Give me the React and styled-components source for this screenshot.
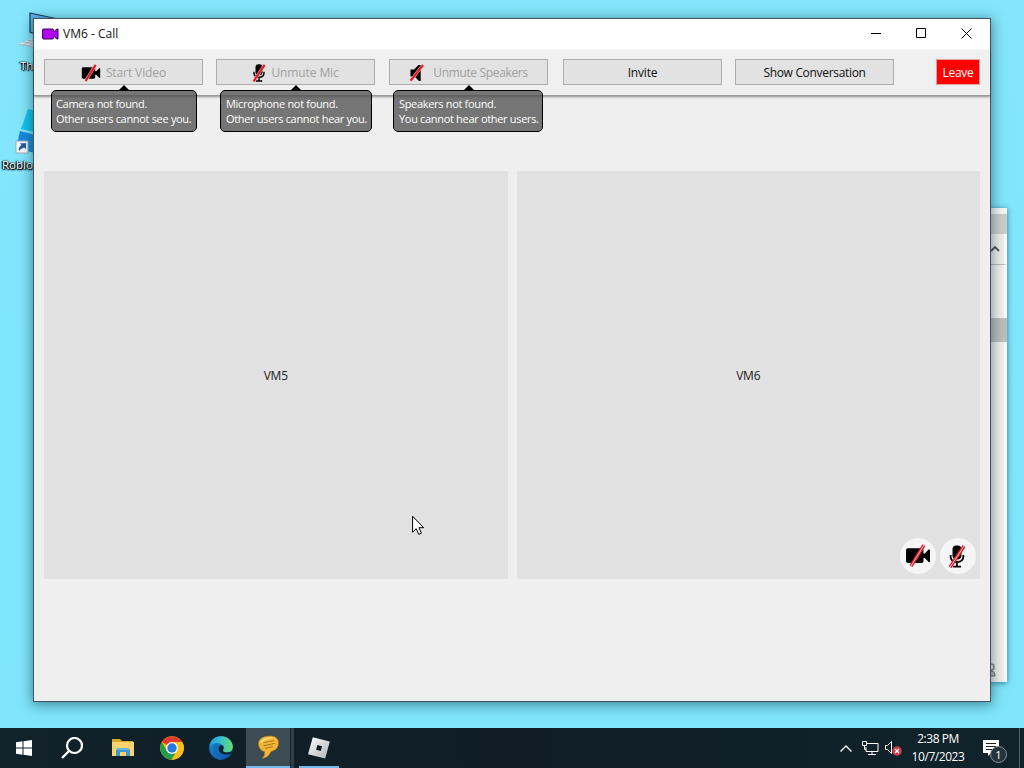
import React from 'react'
import styled, { createGlobalStyle } from 'styled-components'

const GlobalStyle = createGlobalStyle`
* {
  box-sizing: border-box;
}

body {
  margin: 0;
  overflow: hidden;
  font-family: "Open Sans", "Noto Sans", sans-serif;
  font-size: 12px;
}

svg {
  display: block;
  flex-shrink: 0;
}
`

const Desktop = styled.div`
width: 1024px;
height: 768px;
display: flex;
flex-direction: column;
justify-content: space-between;
position: relative;
overflow: hidden;
background: linear-gradient(180deg, #84e6fb 0%, #7fe5fd 50%, #80e5fb 100%);
`

const Shortcuts = styled.div`
width: 60px;
display: flex;
flex-direction: column;
padding-top: 12px;
`

const Shortcut = styled.div`
height: 97px;
padding-left: ${({ $indent }) => $indent}px;

span {
  display: block;
  margin-top: ${({ $gap }) => $gap}px;
  color: white;
  font-size: 11.5px;
  line-height: 14px;
  text-shadow: 0 0 2px #000, 1px 1px 1px #000, -1px 0 1px #000, 0 1px 2px #000;
}

svg {
  margin-left: ${({ $icon }) => $icon}px;
}
`

const BackWindow = styled.div`
position: absolute;
left: 700px;
top: 208px;
width: 307px;
height: 474px;
display: flex;
flex-direction: column;
background: #f0efec;
box-shadow: 0 1px 6px rgba(0, 60, 80, 0.6);
`

const Band = styled.div`
width: 100%;
height: ${({ $height }) => $height}px;
flex-shrink: 0;
display: flex;
align-items: center;
justify-content: flex-end;
padding-right: ${({ $pad }) => $pad || 0}px;
background: ${({ $color }) => $color};
border-right: ${({ $edge }) => ($edge ? '3px solid #fafafa' : 'none')};
border-bottom: ${({ $line }) => ($line ? '1px solid #b9b9b9' : 'none')};
`

const Window = styled.div`
position: absolute;
left: 33px;
top: 18px;
width: 958px;
height: 684px;
display: flex;
flex-direction: column;
background: #efefef;
border: 1px solid #3f555e;
box-shadow: 0 2px 12px 1px rgba(0, 45, 60, 0.5);
`

const TitleBar = styled.div`
height: 31px;
flex-shrink: 0;
display: flex;
align-items: center;
justify-content: space-between;
background: white;
padding-left: 8px;
`

const Title = styled.div`
display: flex;
align-items: center;
gap: 4px;
height: 29px;
color: #111;
margin-bottom: 2px;
`

const Controls = styled.div`
display: flex;
align-items: center;
gap: 34px;
padding-right: 18px;
margin-bottom: 2px;
`

const Toolbar = styled.div`
height: 46px;
flex-shrink: 0;
display: flex;
padding: 9px 10px 0;
background: #f0f0f0;
border-bottom: 1px solid #999;
box-shadow: 0 1px 2px rgba(0, 0, 0, 0.4);
`

const Slot = styled.div`
position: relative;
margin-left: ${({ $before }) => $before || 0}px;
`

const Button = styled.button`
width: 159px;
height: 26px;
display: flex;
align-items: center;
justify-content: center;
gap: ${({ $gap }) => $gap || 5}px;
padding: 1px 0 0;
border: 1px solid #adadad;
background: #e2e2e2;
color: ${({ disabled }) => (disabled ? '#a0a0a0' : '#111')};
font: inherit;
letter-spacing: ${({ $spacing }) => $spacing || -0.1}px;
white-space: nowrap;
`

const LeaveButton = styled(Button)`
width: 44px;
border-color: #e9a0a0;
background: #fe0000;
color: white;
letter-spacing: -0.3px;
`

const Tooltip = styled.div`
position: absolute;
z-index: 2;
top: 31px;
left: ${({ $left }) => $left}px;
width: ${({ $width }) => $width}px;
height: 42px;
padding: 5px 0 0 ${({ $pad }) => $pad || 5}px;
border: 1px solid #000;
border-radius: 5px;
background: rgba(80, 80, 80, 0.77);
color: white;
font-size: 11px;
line-height: 15px;
letter-spacing: -0.32px;
white-space: pre;

&::before {
  content: "";
  position: absolute;
  top: -6px;
  left: ${({ $left }) => 72.5 - $left}px;
  border: 6px solid transparent;
  border-top: 0;
  border-bottom-color: #000;
}
`

const Stage = styled.div`
display: flex;
gap: 9px;
padding: 75px 10px 0;
`

const Tile = styled.div`
position: relative;
flex: 1;
height: 408px;
display: flex;
align-items: center;
justify-content: center;
border-radius: 2px;
background: #e1e1e1;
color: #222;
letter-spacing: -0.2px;
`

const Badges = styled.div`
position: absolute;
right: 4px;
bottom: 5px;
display: flex;
gap: 4px;
`

const Badge = styled.div`
width: 36px;
height: 36px;
display: flex;
align-items: center;
justify-content: center;
padding-right: ${({ $nudge }) => $nudge || 0}px;
border-radius: 50%;
background: #f5f5f5;
`

const Cursor = styled.svg`
position: absolute;
left: 412px;
top: 515px;
`

const Taskbar = styled.div`
height: 40px;
display: flex;
justify-content: space-between;
background: linear-gradient(90deg, #11222a, #101d25 50%, #10232b);
`

const Apps = styled.div`
display: flex;
`

const AppButton = styled.div`
width: ${({ $width }) => $width}px;
height: 40px;
margin-left: ${({ $before }) => $before || 0}px;
display: flex;
align-items: center;
justify-content: center;
background: ${({ $active }) => ($active ? '#3d4b52' : 'transparent')};
border-bottom: ${({ $running }) => ($running ? '2px solid #76b9ed' : 'none')};
box-shadow: ${({ $active }) => ($active ? '1px 0 #17242b, 4px 0 #304048' : 'none')};
`

const Tray = styled.div`
display: flex;
align-items: center;
color: white;
`

const TrayIcon = styled.svg`
margin-left: ${({ $before }) => $before}px;
`

const Clock = styled.div`
width: 66px;
margin-left: 3px;
font-size: 12px;
line-height: 18px;
letter-spacing: -0.45px;
text-align: center;
white-space: nowrap;
`

const Notifications = styled.div`
position: relative;
margin-left: 9px;
width: 40px;
height: 40px;
border-right: 1px solid #526068;
margin-right: 4px;
padding-top: 12px;
padding-left: 3px;
`

const Count = styled.span`
position: absolute;
left: 10px;
top: 18px;
width: 17px;
height: 17px;
border: 1px solid #879197;
border-radius: 50%;
background: #26353c;
font-size: 11px;
line-height: 15px;
text-align: center;
`

const Slash = ({ d }) => (
  <>
    <path d={d} stroke="#f3c9c9" strokeWidth="3" />
    <path d={d} stroke="#e01b24" strokeWidth="2.2" />
  </>
)

// bigger icons show the slash as two red lines with a light core
const WideSlash = ({ d }) => (
  <>
    <path d={d} stroke="#dc2030" strokeWidth="2.7" />
    <path d={d} stroke="#f7c6c6" strokeWidth=".7" />
  </>
)

const CameraOff = ({ size = 20, wide }) => {
  const Line = wide ? WideSlash : Slash
  return (
    <svg width={size} height={size * 0.9} viewBox="0 0 20 18" fill="none">
      <path d="M2.200 3.300H12.800q1.400 0 1.400 1.400v2.600h1L18.200 4.200h1v9.600h-1l-3-3.100h-1v2.600q0 1.400-1.400 1.400H2.200Q.8 14.700.8 13.300V4.700Q.8 3.300 2.200 3.300z" fill="#000" />
      <Line d="M4.600 17L14.600.9" />
    </svg>
  )
}

const MicOff = ({ size = 18, wide }) => {
  const Line = wide ? WideSlash : Slash
  return (
    <svg width={size * 0.78} height={size} viewBox="0 0 14 18" fill="none">
      <rect x="3.500" y=".3" width="7" height="11" rx="3" fill="#000" />
      <path d="M2 7.800v1q0 4.500 5 4.500t5-4.500v-1M7 13v4M3.800 17h6.400" stroke="#000" strokeWidth="1.400" />
      <Line d="M1.600 17.300L12.600.8" />
    </svg>
  )
}

const SpeakerOff = () => (
  <svg width="15" height="18" viewBox="0 0 15 18" fill="none">
    <path d="M1.500 5.500h3.500L9.500 1h2.200v16H10l-4.500-4.500h-4z" fill="#000" />
    <Slash d="M1.600 16.600L14 1" />
  </svg>
)

const FolderIcon = () => (
  <svg width="22" height="20" viewBox="0 0 22 20">
    <path d="M0 1h8l2 2h11v4H0z" fill="#dca427" />
    <path d="M0 4h22v14H0z" fill="#fad36d" />
    <path d="M4 18v-6l2-2h10l2 2v6h-4v-4H8v4z" fill="#3c98d5" />
    <path d="M5 10h12v2H5z" fill="#68b8e8" />
  </svg>
)

const ChromeIcon = () => (
  <svg width="24" height="24" viewBox="0 0 24 24">
    <circle cx="12" cy="12" r="11.800" fill="#fbc016" />
    <path d="M12 12L1.800 6A11.800 11.800 0 0 1 22.200 6z" fill="#e33b2e" />
    <path d="M1.800 6A11.800 11.800 0 0 0 11.500 23.800L17 14.900 12 12 7 14.900z" fill="#249c50" />
    <path d="M12 6h10.200a11.800 11.800 0 0 1-10.700 17.800L17.200 15z" fill="#fbc016" />
    <circle cx="12" cy="12" r="6" fill="#fff" />
    <circle cx="12" cy="12" r="4.700" fill="#2878df" />
  </svg>
)

const EdgeIcon = () => (
  <svg width="24" height="24" viewBox="0 0 24 24">
    <defs>
      <linearGradient id="edgeTop" x1="0" x2="1" y1="0.300" y2="0.300">
        <stop stopColor="#239ddb" />
        <stop offset="0.500" stopColor="#36c3cb" />
        <stop offset="1" stopColor="#69dc64" />
      </linearGradient>
      <linearGradient id="edgeBottom" x1="0" x2="0.700" y1="0" y2="1">
        <stop stopColor="#1592df" />
        <stop offset="1" stopColor="#1259a8" />
      </linearGradient>
    </defs>
    <circle cx="12" cy="12" r="11.800" fill="url(#edgeBottom)" />
    <path d="M.4 10C2 3 7 .2 12 .2c7 0 11.800 5 11.800 10.300 0 4-3 6-6.500 6-3 0-4.300-1.300-3.300-2.700C16 10 12.500 7 8.500 7 4.500 7 1.500 9 .4 10z" fill="url(#edgeTop)" />
    <path d="M9.500 12.500c0-2 1.500-3.200 3-3.200 2 0 2.800 1.800 1.800 4.300-1 2 1 3 3.600 3 2.500 0 5-.8 6-2-.5 2-2 4-5.600 4-4.800 0-8.800-2.200-8.800-6.100z" fill="#10232b" />
    <path d="M8 9c-3 4-1.500 10.500 4 14.300" stroke="#1467ba" strokeWidth="3" fill="none" />
  </svg>
)

const ChatIcon = () => (
  <svg width="24" height="24" viewBox="0 0 24 24">
    <path d="M2.500 8.500C2.500 4 7 1 13.500 1c6 0 9 2.500 9 7 0 4-2.500 7.500-7.500 8.500C13.500 20 11 23 6 23.300 8.500 21.500 9 19 8.500 16.600 4.700 15.800 2.500 12.500 2.500 8.500z" fill="#f5b536" stroke="#a87220" strokeWidth=".6" />
    <path d="M4.500 6.500q5-5.500 16-3.500-11 0-15 5z" fill="#ffe39a" />
    <path d="M7.500 7.800L18 5.500M7.500 10.800L19 8.300M9 13.500l8-1.900" stroke="#a8741f" strokeWidth="1" />
  </svg>
)

const RobloxIcon = () => (
  <svg width="24" height="24" viewBox="0 0 24 24">
    <defs>
      <linearGradient id="robloxFill" x1="0" x2="1" y1="0" y2="1">
        <stop stopColor="#fff" />
        <stop offset="1" stopColor="#aeb3b8" />
      </linearGradient>
    </defs>
    <path d="M5.800 2.200l17 4.400-4.600 17L1 19.200z" fill="url(#robloxFill)" />
    <path d="M10.400 10l4.700 1.200-1.300 4.700-4.700-1.200z" fill="#121e25" />
  </svg>
)

export default function App() {
  return (
    <>
      <GlobalStyle />
      <Desktop>
        <Shortcuts>
          <Shortcut $indent={20} $icon={-2} $gap={9}>
            <svg width="40" height="38" viewBox="0 0 40 38">
              <path d="M12 1l28 6v24L12 20z" fill="#5fb5ee" stroke="#17364b" strokeWidth="1.200" />
              <path d="M0 32l13-5 27 5v6z" fill="#dce7ea" />
              <path d="M1 32l25 5M5 30l25 5M9 28l25 5M4 34l11-6M10 35l8-6" stroke="#a9bcc3" />
            </svg>
            <span>Thi</span>
          </Shortcut>
          <Shortcut $indent={2} $icon={13} $gap={2}>
            <svg width="36" height="47" viewBox="0 0 36 47">
              <path d="M13 0l23 5v22L6 20z" fill="#13c4ec" />
              <path d="M5 22l31 8v17L1 40z" fill="#168be0" />
              <path d="M1 32h12v12H1z" fill="#f7f9fb" stroke="#9daab4" />
              <path d="M4 42q-1-4 2.500-6L5 34.300h6v6L9.300 38.500Q6 39 4 42z" fill="#2359a5" />
            </svg>
            <span>Roblo</span>
          </Shortcut>
        </Shortcuts>

        <BackWindow>
          <Band $height={6} $color="#f5f5f4" />
          <Band $height={20} $color="#cdcdcb" />
          <Band $height={31} $color="#efeeeb" $pad={4} $edge $line>
            <svg width="10" height="6" viewBox="0 0 10 6" fill="none">
              <path d="M1 5l4-4 4 4" stroke="#555" strokeWidth="1.800" />
            </svg>
          </Band>
          <Band $height={53} $color="#f1f0ed" $edge />
          <Band $height={24} $color="#bdbdbc" />
          <Band $height={320} $color="#f0efec" $edge />
          <Band $height={16} $color="#f0efec" $pad={8} $edge>
            <svg width="10" height="14" viewBox="0 0 10 14" fill="none">
              <circle cx="5" cy="4" r="3" stroke="#888" strokeWidth="1.500" />
              <path d="M1 13q0-5 4-5t4 5z" fill="#bbb" stroke="#666" />
            </svg>
          </Band>
          <Band $height={4} $color="#f0efec" $edge />
        </BackWindow>

        <Window>
          <TitleBar>
            <Title>
              <svg width="17" height="12" viewBox="0 0 17 12">
                <path d="M1.500 1h9q1 0 1 1v2l3.500-3h1v10h-1l-3.500-3v2q0 1-1 1h-9q-1 0-1-1V2q0-1 1-1z" fill="#b300f2" stroke="#370553" />
              </svg>
              VM6 - Call
            </Title>
            <Controls>
              <svg width="11" height="11" viewBox="0 0 11 11"><path d="M0 5.500h10" stroke="#000" /></svg>
              <svg width="11" height="11" viewBox="0 0 11 11"><path d="M.5.500h9v9H.5z" stroke="#000" fill="none" /></svg>
              <svg width="11" height="11" viewBox="0 0 11 11"><path d="M.5.500l10 10M10.500.500l-10 10" stroke="#000" /></svg>
            </Controls>
          </TitleBar>

          <Toolbar>
            <Slot>
              <Button disabled><CameraOff />Start Video</Button>
              <Tooltip $left={7} $width={146} $pad={4}>{'Camera not found.\nOther users cannot see you.'}</Tooltip>
            </Slot>
            <Slot $before={13}>
              <Button disabled><MicOff />Unmute Mic</Button>
              <Tooltip $left={4} $width={152}>{'Microphone not found.\nOther users cannot hear you.'}</Tooltip>
            </Slot>
            <Slot $before={14}>
              <Button disabled $gap={9} $spacing={-0.35}><SpeakerOff />Unmute Speakers</Button>
              <Tooltip $left={4} $width={150}>{'Speakers not found.\nYou cannot hear other users.'}</Tooltip>
            </Slot>
            <Slot $before={15}>
              <Button $spacing={-0.2}>Invite</Button>
            </Slot>
            <Slot $before={13}>
              <Button $spacing={-0.32}>Show Conversation</Button>
            </Slot>
            <Slot $before={42}>
              <LeaveButton>Leave</LeaveButton>
            </Slot>
          </Toolbar>

          <Stage>
            <Tile>VM5</Tile>
            <Tile>
              VM6
              <Badges>
                <Badge><CameraOff size={26} wide /></Badge>
                <Badge $nudge={2}><MicOff size={23} wide /></Badge>
              </Badges>
            </Tile>
          </Stage>
        </Window>

        <Cursor width="13" height="21" viewBox="0 0 13 21">
          <path d="M.6 1.200v16l3.600-3.500 2.600 5.700 2.600-1.200-2.500-5.500h4.800z" fill="#fff" stroke="#000" />
        </Cursor>

        <Taskbar>
          <Apps>
            <AppButton $width={48}>
              <svg width="16" height="16" viewBox="0 0 16 16">
                <path d="M0 2.200L6.500 1.300v6.200H0zM7.500 1.200L16 0v7.500H7.500zM0 8.500h6.500v6.200L0 13.800zM7.500 8.500H16V16l-8.500-1.200z" fill="#fff" />
              </svg>
            </AppButton>
            <AppButton $width={48}>
              <svg width="22" height="22" viewBox="0 0 22 22" fill="none">
                <circle cx="13.500" cy="8.500" r="7.500" stroke="#fff" strokeWidth="2.200" />
                <path d="M8 14l-7 7" stroke="#fff" strokeWidth="2.400" />
              </svg>
            </AppButton>
            <AppButton $width={48} $before={3}><FolderIcon /></AppButton>
            <AppButton $width={48} $before={1}><ChromeIcon /></AppButton>
            <AppButton $width={48} $before={1}><EdgeIcon /></AppButton>
            <AppButton $width={44} $before={1} $active $running><ChatIcon /></AppButton>
            <AppButton $width={40} $before={9} $running><RobloxIcon /></AppButton>
          </Apps>
          <Tray>
            <TrayIcon $before={0} width="12" height="7" viewBox="0 0 12 7" fill="none">
              <path d="M.5 6.500L6 1l5.500 5.500" stroke="#fff" strokeWidth="1.300" />
            </TrayIcon>
            <TrayIcon $before={10} width="17" height="15" viewBox="0 0 17 15" fill="none">
              <path d="M5 2.500h11v8H4V6M10 10.500v3M6 13.500h8M.5.500h4v4h-4zM2.500 5v3.500H4" stroke="#fff" />
            </TrayIcon>
            <TrayIcon $before={6} width="17" height="16" viewBox="0 0 17 16" fill="none">
              <path d="M.5 5.500h2l4-4v12l-4-4h-2z" stroke="#fff" />
              <circle cx="12" cy="11" r="4.700" fill="#d83a4a" />
              <path d="M10 9l4 4M14 9l-4 4" stroke="#fff" strokeWidth="1.200" />
            </TrayIcon>
            <Clock>
              <div>2:38 PM</div>
              <div>10/7/2023</div>
            </Clock>
            <Notifications>
              <svg width="17" height="17" viewBox="0 0 17 17">
                <path d="M0 0h16v13H8l-3 3v-3H0z" fill="#fff" />
                <path d="M3 3.500h10M3 6.500h10M3 9.500h6" stroke="#14232b" />
              </svg>
              <Count>1</Count>
            </Notifications>
          </Tray>
        </Taskbar>
      </Desktop>
    </>
  )
}
